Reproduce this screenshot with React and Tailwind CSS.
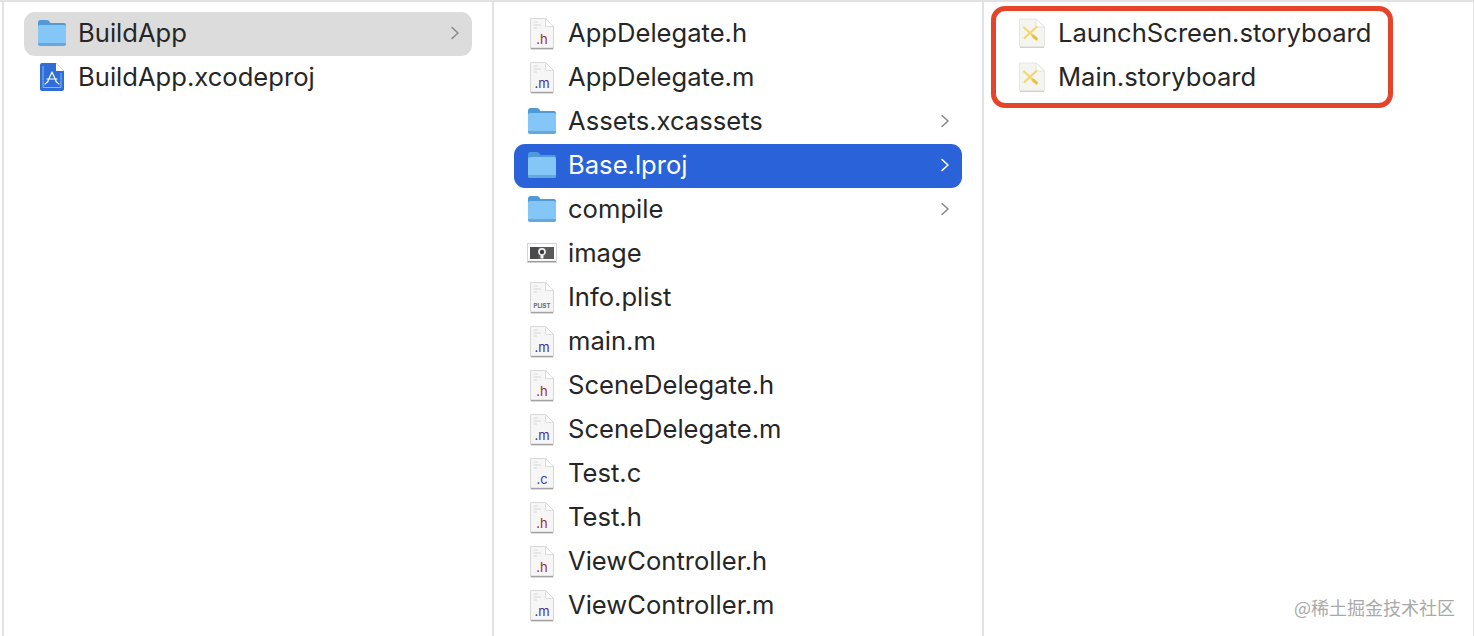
const col1 = [
  { name: 'BuildApp', icon: 'folder', chevron: true, active: 'gray' },
  { name: 'BuildApp.xcodeproj', icon: 'xcode' },
];

const col2 = [
  { name: 'AppDelegate.h', icon: 'h' },
  { name: 'AppDelegate.m', icon: 'm' },
  { name: 'Assets.xcassets', icon: 'folder', chevron: true },
  { name: 'Base.lproj', icon: 'folder', chevron: true, active: 'blue' },
  { name: 'compile', icon: 'folder', chevron: true },
  { name: 'image', icon: 'image' },
  { name: 'Info.plist', icon: 'plist' },
  { name: 'main.m', icon: 'm' },
  { name: 'SceneDelegate.h', icon: 'h' },
  { name: 'SceneDelegate.m', icon: 'm' },
  { name: 'Test.c', icon: 'c' },
  { name: 'Test.h', icon: 'h' },
  { name: 'ViewController.h', icon: 'h' },
  { name: 'ViewController.m', icon: 'm' },
];

const col3 = [
  { name: 'LaunchScreen.storyboard', icon: 'storyboard' },
  { name: 'Main.storyboard', icon: 'storyboard' },
];

function FolderIcon() {
  return (
    <svg width="30" height="28" viewBox="0 0 30 28">
      <path d="M1 4 Q1 1 3.5 1 H10 Q11.5 1 12.5 2.5 L13.5 4 H27 Q29 4 29 6 V12 H1 Z" fill="#4f9bd8" />
      <path d="M1 7.5 Q1 6 3 6 H27 Q29 6 29 7.5 V24.5 Q29 27 26.5 27 H3.5 Q1 27 1 24.5 Z" fill="#84c6f5" />
      <path d="M1 24 H29 V24.5 Q29 27 26.5 27 H3.5 Q1 27 1 24.5 Z" fill="#62a9e2" />
    </svg>
  );
}

function DocIcon({ label, color, children }) {
  return (
    <svg width="26" height="33" viewBox="0 0 26 33">
      <path d="M2 1.5 H16.5 L24.5 9.5 V31 Q24.5 32 23.5 32 H2.5 Q1.5 32 1.5 31 V2 Q1.5 1.5 2 1.5 Z" fill="#f6f6f6" stroke="#d6d6d6" strokeWidth="1" />
      <path d="M16.5 1.5 V9.5 H24.5 Z" fill="#ffffff" stroke="#dcdcdc" strokeWidth="1" />
      <path d="M2 31.5 H24" stroke="#a3a3a3" strokeWidth="1.4" />
      {children}
      <text x="13" y={label === 'PLIST' ? 27 : 26.5} textAnchor="middle" fontSize={label === 'PLIST' ? 6 : 13} fontWeight={label === 'PLIST' ? 700 : 400} fill={color} fontFamily="Inter, sans-serif">
        {label}
      </text>
    </svg>
  );
}

function CodeLines() {
  return <path d="M4.5 5 H9 M4.5 8 H12 M4.5 11 H8" stroke="#d8d8d8" strokeWidth="1" />;
}

function XcodeIcon() {
  return (
    <svg width="26" height="30" viewBox="0 0 26 30">
      <path d="M3 1 H17 L25 9 V27 Q25 29 23 29 H3 Q1 29 1 27 V3 Q1 1 3 1 Z" fill="#2f6ed8" />
      <path d="M17 1 V9 H25 Z" fill="#ffffff" />
      <path d="M4 4 V25.5 H22 V11" fill="none" stroke="#a9c8f3" strokeWidth="0.8" />
      <path d="M13 10 L8.5 20 M13 10 L17.5 20 M8 17 H18 M6 22 L9 19.5 M20 22 L17 19.5" fill="none" stroke="#ffffff" strokeWidth="1.2" strokeLinecap="round" />
    </svg>
  );
}

function ImageIcon() {
  return (
    <svg width="30" height="20" viewBox="0 0 30 20">
      <rect x="0.5" y="0.5" width="29" height="19" fill="#ffffff" stroke="#d4d4d4" />
      <rect x="3" y="4" width="24" height="12" fill="#5a5a5c" />
      <rect x="3" y="4" width="8" height="12" fill="#4a4a4c" />
      <path d="M15 5 C11.5 5 10.5 8 11.5 10.5 C12 11.5 13 12 13.5 12 V15.5 H16.5 V12 C17 12 18 11.5 18.5 10.5 C19.5 8 18.5 5 15 5 Z" fill="#f2f2f2" />
      <circle cx="15" cy="9" r="2.2" fill="#3c3c3e" />
      <path d="M1 18.5 H29" stroke="#9a9a9a" strokeWidth="1.2" />
    </svg>
  );
}

function StoryboardIcon() {
  return (
    <svg width="28" height="30" viewBox="0 0 28 30">
      <path d="M1.5 1 H18 L26.5 9 V28 Q26.5 29.5 25 29.5 H3 Q1.5 29.5 1.5 28 Z" fill="#f4f4f1" stroke="#e6e6e2" strokeWidth="1" />
      <path d="M18 1 V9 H26.5 Z" fill="#ffffff" stroke="#e3e3df" strokeWidth="1" />
      <path d="M6 9.5 L18 20.5 M18.5 9 L6.5 20" fill="none" stroke="#f5d76a" strokeWidth="2.2" strokeLinecap="round" />
      <path d="M15 18 L18.5 21" fill="none" stroke="#e9c23f" strokeWidth="3" strokeLinecap="round" />
      <path d="M2 29.2 H26" stroke="#c8c8c4" strokeWidth="1" />
    </svg>
  );
}

function FileIcon({ type }) {
  if (type === 'folder') return <FolderIcon />;
  if (type === 'xcode') return <XcodeIcon />;
  if (type === 'image') return <ImageIcon />;
  if (type === 'storyboard') return <StoryboardIcon />;
  if (type === 'plist') return <DocIcon label="PLIST" color="#666666"><CodeLines /></DocIcon>;
  if (type === 'h') return <DocIcon label=".h" color="#9c2b2b"><CodeLines /></DocIcon>;
  if (type === 'm') return <DocIcon label=".m" color="#4a2a94"><CodeLines /></DocIcon>;
  return <DocIcon label=".c" color="#3a3aa8"><CodeLines /></DocIcon>;
}

function Chevron({ white }) {
  return (
    <svg width="10" height="14" viewBox="0 0 10 14" className="absolute right-[12px] top-[14px]">
      <path d="M2 1.5 L8 7 L2 12.5" fill="none" stroke={white ? '#ffffff' : '#8a8a8a'} strokeWidth="1.6" strokeLinecap="round" strokeLinejoin="round" />
    </svg>
  );
}

function Row({ item }) {
  const bg = item.active === 'blue' ? 'bg-[#2a62d9] text-white' : item.active === 'gray' ? 'bg-[#dcdcdc] text-[#262626]' : 'text-[#262626]';
  return (
    <div className={`relative flex h-11 items-center rounded-[11px] ${bg}`}>
      <div className="flex w-[54px] shrink-0 justify-center pb-[2px] pl-[2px]">
        <FileIcon type={item.icon} />
      </div>
      <span className="whitespace-nowrap pb-[2px]">{item.name}</span>
      {item.chevron && <Chevron white={item.active === 'blue'} />}
    </div>
  );
}

function Column({ items, className }) {
  return (
    <div className={`flex flex-col px-5 pt-[10px] ${className}`}>
      {items.map((item) => (
        <Row key={item.name} item={item} />
      ))}
    </div>
  );
}

export default function App() {
  return (
    <div className="relative flex h-[636px] w-[1474px] overflow-hidden border-t-2 border-r border-[#e2e2e2] bg-white font-['Inter',sans-serif] text-[25.6px]">
      <Column items={col1} className="ml-[2px] w-[492px] shrink-0 border-x-2 border-[#e2e2e2] pl-[20px]" />
      <Column items={col2} className="w-[490px] shrink-0 border-r-2 border-[#e2e2e2]" />
      <Column items={col3} className="flex-1" />

      <div className="absolute left-[991px] top-[4px] h-[102px] w-[402px] rounded-[14px] border-[5px] border-[#e5432a]" />
      <div className="absolute left-[1294px] top-[593px] font-['Noto_Sans_CJK_SC',sans-serif] text-[18px] leading-[24px] text-[#a9a9a9]">
        @稀土掘金技术社区
      </div>
    </div>
  );
}
